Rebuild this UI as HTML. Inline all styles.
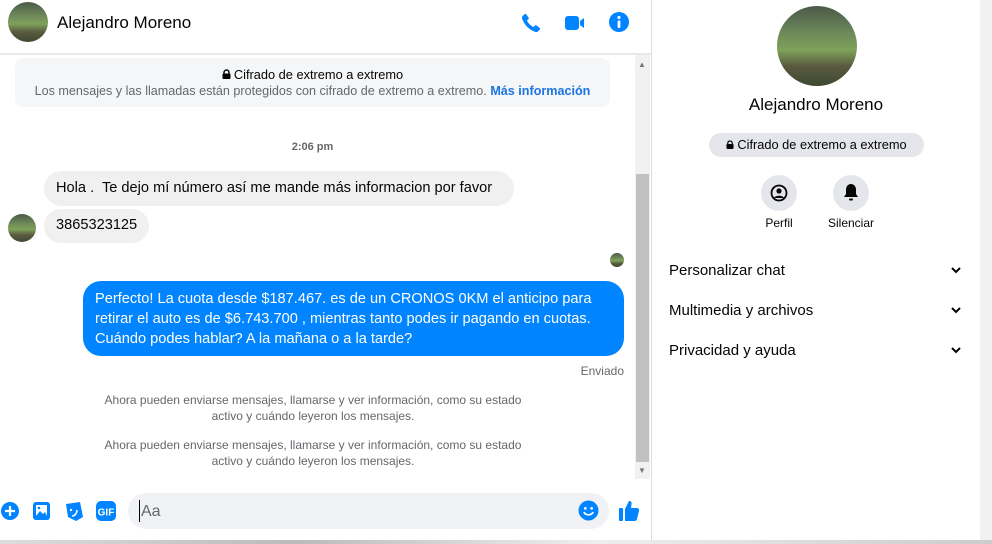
<!DOCTYPE html>
<html><head><meta charset="utf-8"><style>
*{margin:0;padding:0;box-sizing:border-box}
body{width:992px;height:544px;overflow:hidden;background:#fff;font-family:"Liberation Sans",sans-serif;position:relative;color:#050505}
.a{position:absolute}
.av{border-radius:50%;background:linear-gradient(180deg,#4a5a48 0%,#6f8a5a 35%,#7ea25a 55%,#5a5a40 75%,#3d4a30 100%)}
.sys{font-size:12px;color:#65676b;text-align:center;width:440px;line-height:16px}
.row{font-size:15px;color:#050505}
</style></head><body>
<div class="a av" style="left:8px;top:2px;width:40px;height:40px"></div>
<div class="a" style="left:57px;top:13px;font-size:17px">Alejandro Moreno</div>
<svg class="a" style="left:520px;top:12px" width="22" height="22" viewBox="0 0 24 24"><path fill="#0084ff" d="M6.6 2.5l2.8 3.6c.4.5.3 1.2-.1 1.6L7.6 9.3c1.2 2.8 4.3 6 7.1 7.1l1.6-1.7c.4-.4 1.1-.5 1.6-.1l3.6 2.8c.5.4.6 1.2.1 1.7l-1.9 2c-.8.8-2 1-3 .6C10 19.4 4.6 14 2.3 7.2c-.4-1 0-2.2.7-3l2-1.9c.5-.5 1.200-.4 1.6.2z"/></svg>
<svg class="a" style="left:564px;top:13px" width="22" height="20" viewBox="0 0 22 20"><rect x="1" y="3" width="14" height="14" rx="3" fill="#0084ff"/><path d="M16 8l4-3v10l-4-3z" fill="#0084ff"/></svg>
<svg class="a" style="left:608px;top:11px" width="22" height="22" viewBox="0 0 22 22"><circle cx="11" cy="11" r="10" fill="#0084ff"/><circle cx="11" cy="6.5" r="1.6" fill="#fff"/><rect x="9.6" y="9.5" width="2.8" height="7.5" rx="1" fill="#fff"/></svg>
<div class="a" style="left:0;top:53px;width:651px;height:2px;background:#e8e8e8"></div>
<div class="a" style="left:651px;top:0;width:1px;height:544px;background:#ddd"></div>
<div class="a" style="left:15px;top:58px;width:595px;height:49px;background:#f5f6f7;border-radius:8px"></div>
<div class="a" style="left:0;top:67px;width:625px;text-align:center;font-size:12.8px"><svg width="9" height="10" viewBox="0 0 9 10" style="margin-right:3px"><path d="M2 5V3.5a2.5 2.5 0 015 0V5" stroke="#050505" stroke-width="1.4" fill="none"/><rect x="0.5" y="4.5" width="8" height="5.5" rx="1" fill="#050505"/></svg>Cifrado de extremo a extremo</div>
<div class="a" style="left:0;top:84px;width:625px;text-align:center;font-size:12.6px;color:#65676b">Los mensajes y las llamadas están protegidos con cifrado de extremo a extremo. <span style="color:#1b74e4;font-weight:bold">Más información</span></div>
<div class="a" style="left:635px;top:55px;width:15px;height:424px;background:#f1f1f1"></div>
<div class="a" style="left:636px;top:174px;width:13px;height:288px;background:#c1c1c1"></div>
<div class="a" style="left:638px;top:60px;font-size:8px;color:#777">▲</div>
<div class="a" style="left:638px;top:466px;font-size:8px;color:#777">▼</div>
<div class="a" style="left:0;top:141px;width:625px;text-align:center;font-size:11px;color:#65676b;font-weight:bold">2:06 pm</div>
<div class="a" style="left:44px;top:171px;width:470px;height:35px;background:#f0f0f0;border-radius:18px;padding:9px 12px;font-size:14.6px;white-space:nowrap">Hola .&nbsp; Te dejo mí número así me mande más informacion por favor</div>
<div class="a" style="left:44px;top:209px;width:105px;height:34px;background:#f0f0f0;border-radius:18px;padding:8px 12px;font-size:14.6px">3865323125</div>
<div class="a av" style="left:8px;top:214px;width:28px;height:28px"></div>
<div class="a av" style="left:610px;top:253px;width:14px;height:14px"></div>
<div class="a" style="left:83px;top:281px;width:541px;height:75px;background:#0084ff;border-radius:18px;padding:8px 12px;font-size:14.6px;color:#fff;line-height:20px">Perfecto! La cuota desde $187.467. es de un CRONOS 0KM el anticipo para retirar el auto es de $6.743.700 , mientras tanto podes ir pagando en cuotas. Cuándo podes hablar? A la mañana o a la tarde?</div>
<div class="a" style="left:560px;top:364px;width:64px;text-align:right;font-size:12px;color:#65676b">Enviado</div>
<div class="a sys" style="left:93px;top:392px">Ahora pueden enviarse mensajes, llamarse y ver información, como su estado activo y cuándo leyeron los mensajes.</div>
<div class="a sys" style="left:93px;top:437px">Ahora pueden enviarse mensajes, llamarse y ver información, como su estado activo y cuándo leyeron los mensajes.</div>
<svg class="a" style="left:0;top:501px" width="20" height="20" viewBox="0 0 20 20"><circle cx="10" cy="10" r="9" fill="#0084ff"/><path d="M10 5v10M5 10h10" stroke="#fff" stroke-width="2.2"/></svg>
<svg class="a" style="left:32px;top:500px" width="20" height="22" viewBox="0 0 20 22"><rect x="1" y="2" width="17" height="18" rx="3" fill="#0084ff"/><rect x="4" y="5" width="11" height="11" fill="#fff"/><path d="M4 16l4-5 3 3 2-2 2 4z" fill="#0084ff"/><circle cx="7" cy="8" r="1.3" fill="#0084ff"/></svg>
<svg class="a" style="left:64px;top:501px" width="20" height="21" viewBox="0 0 20 21"><path d="M2 3l14-2 3 15-7 4-8-4z" fill="#0084ff"/><circle cx="7" cy="9" r="1.2" fill="#fff"/><path d="M8 15c3 0 5-3 5-6" stroke="#fff" stroke-width="1.6" fill="none"/></svg>
<svg class="a" style="left:95px;top:500px" width="22" height="22" viewBox="0 0 22 22"><rect x="1" y="1" width="20" height="20" rx="5" fill="#0084ff"/><text x="11" y="15.5" text-anchor="middle" font-family="Liberation Sans" font-weight="bold" font-size="10" fill="#fff">GIF</text></svg>
<div class="a" style="left:128px;top:493px;width:481px;height:36px;background:#f0f2f5;border-radius:18px"></div>
<div class="a" style="left:139px;top:500px;width:1px;height:22px;background:#000"></div>
<div class="a" style="left:141px;top:503px;font-size:16px;color:#65676b">Aa</div>
<svg class="a" style="left:578px;top:500px" width="21" height="21" viewBox="0 0 20 20"><circle cx="10" cy="10" r="9.5" fill="#0084ff"/><circle cx="7" cy="8" r="1.3" fill="#fff"/><circle cx="13" cy="8" r="1.3" fill="#fff"/><path d="M5.5 11.5c2 3.5 7 3.5 9 0" stroke="#fff" stroke-width="1.6" fill="none"/></svg>
<svg class="a" style="left:618px;top:499px" width="22" height="23" viewBox="0 0 22 23"><rect x="1" y="9" width="4" height="13" rx="1" fill="#0084ff"/><path d="M7 10l4-8c2 0 3 1 2.5 3.5L13 9h6c1.5 0 2.5 1.5 2 3l-2 8c-.4 1.2-1.2 2-2.5 2H7z" fill="#0084ff"/></svg>
<div class="a" style="left:0;top:540px;width:992px;height:4px;background:linear-gradient(90deg,#ddd,#bbb 30%,#eee 60%,#ccc)"></div>
<div class="a" style="left:980px;top:0;width:12px;height:540px;background:#f1f1f1"></div>
<div class="a av" style="left:777px;top:6px;width:80px;height:80px"></div>
<div class="a" style="left:652px;top:95px;width:328px;text-align:center;font-size:17px">Alejandro Moreno</div>
<div class="a" style="left:709px;top:133px;width:215px;height:24px;background:#e4e6eb;border-radius:12px;font-size:12.8px;text-align:center;line-height:24px"><svg width="8" height="9" viewBox="0 0 9 10" style="margin-right:3px"><path d="M2 5V3.5a2.5 2.5 0 015 0V5" stroke="#050505" stroke-width="1.4" fill="none"/><rect x="0.5" y="4.5" width="8" height="5.5" rx="1" fill="#050505"/></svg>Cifrado de extremo a extremo</div>
<div class="a" style="left:761px;top:175px;width:36px;height:36px;border-radius:50%;background:#e4e6eb"></div>
<svg class="a" style="left:770px;top:184px" width="18" height="18" viewBox="0 0 18 18"><circle cx="9" cy="9" r="7.5" fill="none" stroke="#050505" stroke-width="1.8"/><circle cx="9" cy="7" r="2.6" fill="#050505"/><path d="M4 14c1-3 9-3 10 0" fill="#050505"/></svg>
<div class="a" style="left:833px;top:175px;width:36px;height:36px;border-radius:50%;background:#e4e6eb"></div>
<svg class="a" style="left:843px;top:183px" width="16" height="19" viewBox="0 0 16 19"><path d="M8 1c-3 0-5 2.5-5 5.5V11L1 14h14l-2-3V6.5C13 3.5 11 1 8 1z" fill="#050505"/><rect x="6" y="15.5" width="4" height="2" rx="1" fill="#050505"/></svg>
<div class="a" style="left:749px;top:216px;width:60px;text-align:center;font-size:12px;color:#050505">Perfil</div>
<div class="a" style="left:816px;top:216px;width:70px;text-align:center;font-size:12px">Silenciar</div>
<div class="a row" style="left:669px;top:262px">Personalizar chat</div>
<div class="a row" style="left:669px;top:302px">Multimedia y archivos</div>
<div class="a row" style="left:669px;top:342px">Privacidad y ayuda</div>
<svg class="a" style="left:950px;top:264px" width="12" height="12" viewBox="0 0 12 12"><path d="M2 4l4 4 4-4" stroke="#050505" stroke-width="2" fill="none"/></svg>
<svg class="a" style="left:950px;top:304px" width="12" height="12" viewBox="0 0 12 12"><path d="M2 4l4 4 4-4" stroke="#050505" stroke-width="2" fill="none"/></svg>
<svg class="a" style="left:950px;top:344px" width="12" height="12" viewBox="0 0 12 12"><path d="M2 4l4 4 4-4" stroke="#050505" stroke-width="2" fill="none"/></svg>
</body></html>
